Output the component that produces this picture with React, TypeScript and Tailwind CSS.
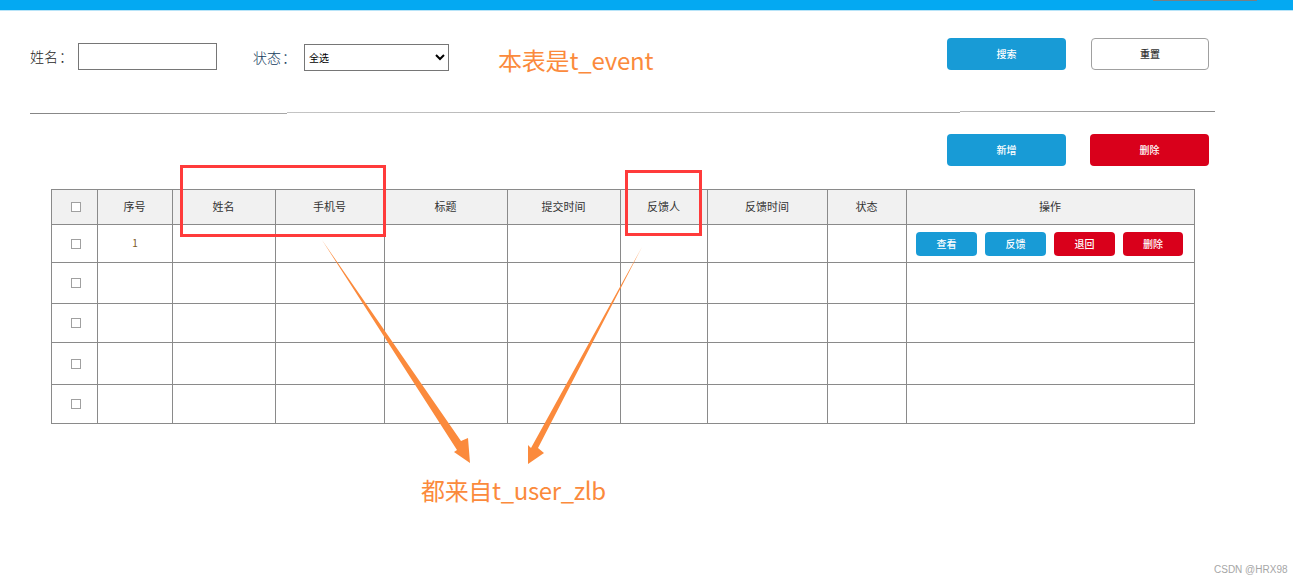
const columns = [
  { label: "序号", width: "w-[75px]" },
  { label: "姓名", width: "w-[103px]" },
  { label: "手机号", width: "w-[109px]" },
  { label: "标题", width: "w-[123px]" },
  { label: "提交时间", width: "w-[113px]" },
  { label: "反馈人", width: "w-[87px]" },
  { label: "反馈时间", width: "w-[120px]" },
  { label: "状态", width: "w-[79px]" },
  { label: "操作", width: "w-[288px]" },
];

const rowHeights = ["h-[38px]", "h-[41px]", "h-[39px]", "h-[42px]", "h-[39px]"];

const cellBorder = "border border-[#8a8a8a] p-0";

const Check = () => (
  <input
    type="checkbox"
    className="block ml-[19px] w-[10px] h-[10px] appearance-none border border-[#a0a0a0] bg-white"
  />
);

const PageButton = ({ text, tone }: { text: string; tone: "blue" | "red" | "plain" }) => {
  const toneClass =
    tone === "blue"
      ? "w-[119px] bg-[#189bd6] text-white"
      : tone === "red"
        ? "w-[119px] bg-[#d9001b] text-white"
        : "w-[118px] bg-white text-[#333333] border border-[#a0a0a0]";
  return (
    <button className={`h-[32px] pb-[2px] rounded-[4px] text-[10px] font-medium ${toneClass}`}>{text}</button>
  );
};

const RowButton = ({ text, red, narrow }: { text: string; red?: boolean; narrow?: boolean }) => (
  <button
    className={`${narrow ? "w-[60px]" : "w-[61px]"} h-[24px] pb-px rounded-[4px] text-[10px] font-medium text-white ${red ? "bg-[#d9001b]" : "bg-[#189bd6]"}`}
  >
    {text}
  </button>
);

export default function App() {
  return (
    <div className="relative w-[1303px] h-[583px] overflow-hidden bg-white font-['Noto_Sans_CJK_SC','Liberation_Sans',sans-serif]">
      {/* Top bar */}
      <div className="w-[1293px] h-[11px] bg-[#04a9f2] border-b border-[#b8e4f8] flex justify-end pr-[36px]">
        <div className="w-[104px] h-px bg-[#777f85]" />
      </div>

      {/* Search row */}
      <div className="w-[1293px] h-[59px] flex items-start">
        <div className="flex items-center ml-[30px] mt-[32px]">
          <span className="w-[48px] text-[14px] font-light text-[#1f1f1f]">
            姓名<span className="ml-[1px]">：</span>
          </span>
          <input className="w-[139px] h-[27px] border border-[#767676] bg-white" />
        </div>
        <div className="flex items-center ml-[36px] mt-[33px]">
          <span className="w-[51px] text-[14px] font-light text-[#123a5c]">
            状态<span className="ml-[1px]">：</span>
          </span>
          <select className="w-[145px] h-[27px] border border-[#767676] bg-white text-[10px] text-black rounded-none">
            <option>全选</option>
          </select>
        </div>
        <div className="ml-auto mr-[84px] mt-[27px] flex gap-[25px]">
          <PageButton text="搜索" tone="blue" />
          <PageButton text="重置" tone="plain" />
        </div>
      </div>

      {/* Divider, slightly tilted in the picture */}
      <div className="ml-[30px] mt-[41px] w-[1185px] h-[3px] flex">
        <div className="w-[257px] h-px self-end bg-gradient-to-r from-[#858585] to-[#a8a8a8]" />
        <div className="w-[673px] h-px self-center bg-gradient-to-r from-[#c4c4c4] to-[#a8a8a8]" />
        <div className="w-[255px] h-px self-start bg-gradient-to-r from-[#b8b8b8] to-[#8c8c8c]" />
      </div>

      {/* Add / delete */}
      <div className="w-[1293px] flex justify-end gap-[24px] pr-[84px] mt-[20px]">
        <PageButton text="新增" tone="blue" />
        <PageButton text="删除" tone="red" />
      </div>

      {/* Table */}
      <table className="ml-[51px] mt-[23px] w-[1144px] table-fixed border-collapse text-[11px] text-[#333333]">
        <thead>
          <tr className="h-[35px] bg-[#f1f1f1]">
            <th className={`${cellBorder} w-[46px]`}>
              <Check />
            </th>
            {columns.map((col) => (
              <th key={col.label} className={`${cellBorder} ${col.width} pb-[2px] pr-[1px] font-normal`}>
                {col.label}
              </th>
            ))}
          </tr>
        </thead>
        <tbody>
          {rowHeights.map((height, i) => (
            <tr key={height + i} className={height}>
              <td className={cellBorder}>
                <Check />
              </td>
              <td className={`${cellBorder} text-center text-[10px] text-[#7a5a1e] pb-[2px]`}>{i === 0 ? "1" : ""}</td>
              <td className={cellBorder} />
              <td className={cellBorder} />
              <td className={cellBorder} />
              <td className={cellBorder} />
              <td className={cellBorder} />
              <td className={cellBorder} />
              <td className={cellBorder} />
              <td className={cellBorder}>
                {i === 0 && (
                  <div className="flex gap-[8px] pl-[9px]">
                    <RowButton text="查看" />
                    <RowButton text="反馈" />
                    <RowButton text="退回" red />
                    <RowButton text="删除" red narrow />
                  </div>
                )}
              </td>
            </tr>
          ))}
        </tbody>
      </table>

      {/* Annotations drawn over the page */}
      <div className="absolute left-[180px] top-[165px] w-[206px] h-[72px] border-[3px] border-[#ff3b3b]" />
      <div className="absolute left-[625px] top-[170px] w-[77px] h-[66px] border-[3px] border-[#ff3b3b]" />
      <svg className="absolute left-0 top-0 pointer-events-none" width="1303" height="583">
        <polygon points="322,240 461,441 468,438 470,463 454,452 457,450" fill="#fb8a3c" />
        <polygon points="642,247 538,448 544,453 528,464 528,445 531,448" fill="#fb8a3c" />
      </svg>
      <div className="absolute left-[498px] top-[42px] text-[24px] leading-[36px] tracking-[-0.2px] text-[#fb8a3c]">
        本表是t_event
      </div>
      <div className="absolute left-[421px] top-[472px] text-[24px] leading-[36px] tracking-[-0.35px] text-[#fb8a3c]">
        都来自t_user_zlb
      </div>
      <div className="absolute left-[1214px] top-[563px] text-[10px] leading-[14px] text-[#a6a6a6] font-['Liberation_Sans',sans-serif]">
        CSDN @HRX98
      </div>
    </div>
  );
}
